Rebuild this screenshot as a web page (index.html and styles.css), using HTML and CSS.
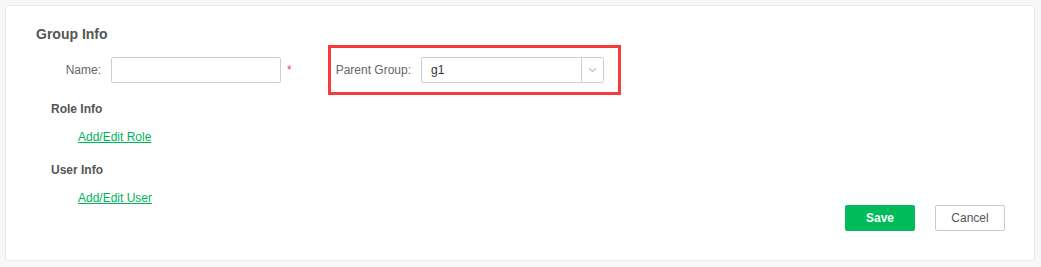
FILE: index.html
```html
<!DOCTYPE html>
<html>
<head>
<meta charset="utf-8">
<link rel="stylesheet" href="styles.css">
</head>
<body>
<div class="card">
  <div class="main">
    <div class="title">Group Info</div>
    <div class="row">
      <label class="label">Name:</label>
      <input class="input" type="text">
      <span class="req">*</span>
      <div class="highlight">
        <span class="label-inline">Parent Group:</span>
        <div class="select">
          <span class="select-value">g1</span>
          <span class="select-arrow">
            <svg width="9" height="6" viewBox="0 0 9 6"><path d="M1 1.2 L4.5 4.5 L8 1.2" fill="none" stroke="#c4c4c4" stroke-width="1.2"/></svg>
          </span>
        </div>
      </div>
    </div>
    <div class="section-title first">Role Info</div>
    <a class="link" href="#">Add/Edit Role</a>
    <div class="section-title">User Info</div>
    <a class="link" href="#">Add/Edit User</a>
  </div>
  <div class="actions">
    <button class="btn btn-primary">Save</button>
    <button class="btn btn-default">Cancel</button>
  </div>
</div>
</body>
</html>
```
FILE: styles.css
```css
html, body {
  margin: 0;
  padding: 0;
}
body {
  background: #f6f7f9;
  padding: 5px;
  font-family: "Liberation Sans", Arial, sans-serif;
  font-size: 12px;
  color: #555;
  width: 1041px;
  height: 267px;
  box-sizing: border-box;
}
.card {
  width: 1030px;
  height: 256px;
  box-sizing: border-box;
  background: #fff;
  border: 1px solid #e9eaec;
  border-radius: 3px;
  padding: 20px 29px 29px 30px;
  display: flex;
}
.main {
  flex: 1;
  display: flex;
  flex-direction: column;
  align-items: flex-start;
}
.title {
  font-size: 14px;
  font-weight: bold;
  line-height: 16px;
  color: #555;
}
.row {
  margin-top: 15px;
  height: 26px;
  display: flex;
  align-items: center;
}
.label {
  width: 65px;
  text-align: right;
  color: #666;
  margin-right: 10px;
  line-height: 20px;
}
.input {
  width: 170px;
  height: 26px;
  box-sizing: border-box;
  border: 1px solid #cfcfcf;
  border-radius: 2px;
  margin: 0;
  padding: 0 8px;
  font: inherit;
  outline: none;
}
.req {
  color: #f5484a;
  margin-left: 6px;
  line-height: 20px;
}
.highlight {
  margin: -12px 0 -12px 36px;
  border: 3px solid #f53b3b;
  padding: 9px 14px 9px 5px;
  display: flex;
  align-items: center;
}
.label-inline {
  color: #666;
  margin-right: 10px;
  line-height: 20px;
}
.select {
  width: 183px;
  height: 26px;
  box-sizing: border-box;
  border: 1px solid #cfcfcf;
  border-radius: 2px;
  display: flex;
  align-items: stretch;
}
.select-value {
  flex: 1;
  padding-left: 9px;
  color: #333;
  line-height: 24px;
}
.select-arrow {
  width: 21px;
  border-left: 1px solid #cfcfcf;
  display: flex;
  align-items: center;
  justify-content: center;
}
.section-title {
  font-weight: bold;
  line-height: 20px;
  margin-left: 15px;
  margin-top: 13px;
  color: #555;
}
.section-title.first {
  margin-top: 16px;
}
.link {
  color: #00b35c;
  text-decoration: underline;
  line-height: 20px;
  margin-left: 42px;
  margin-top: 8px;
}
.actions {
  align-self: flex-end;
  display: flex;
  gap: 20px;
}
.btn {
  width: 70px;
  height: 26px;
  box-sizing: border-box;
  border-radius: 2px;
  font-family: inherit;
  font-size: 12px;
  padding: 0;
  cursor: pointer;
}
.btn-primary {
  background: #00bb5a;
  border: 1px solid #00bb5a;
  color: #fff;
  font-weight: bold;
}
.btn-default {
  background: #fff;
  border: 1px solid #cbcbcb;
  color: #555;
}
```
